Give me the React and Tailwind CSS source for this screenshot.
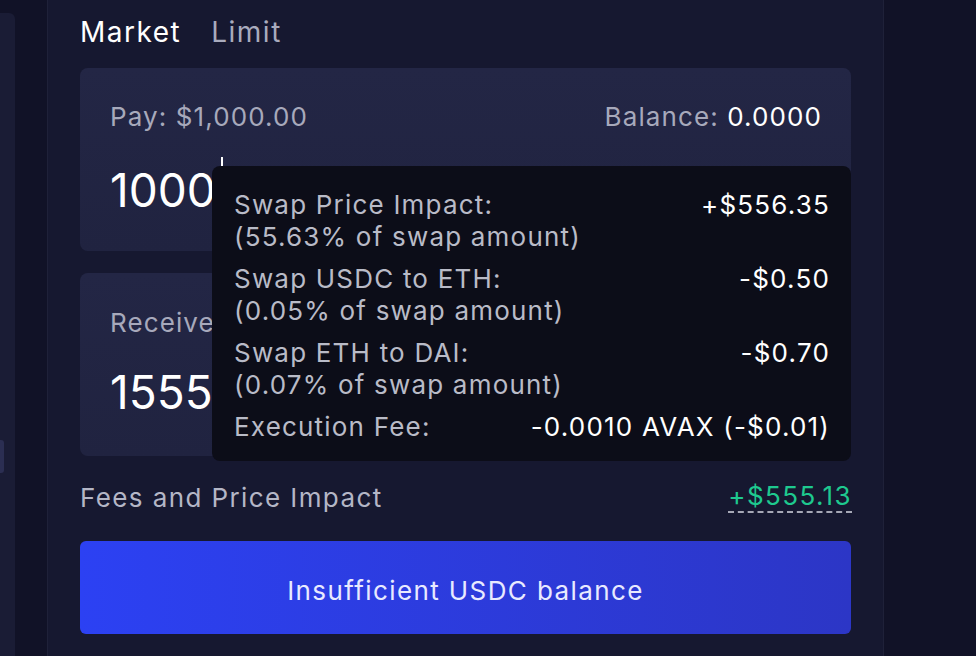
export default function App() {
  const rows = [
    { l1: "Swap Price Impact:", l2: "(55.63% of swap amount)", v: "+$556.35" },
    { l1: "Swap USDC to ETH:", l2: "(0.05% of swap amount)", v: "-$0.50" },
    { l1: "Swap ETH to DAI:", l2: "(0.07% of swap amount)", v: "-$0.70" },
  ];
  return (
    <div
      className="w-[976px] h-[656px] bg-[#111227] flex overflow-hidden"
      style={{ fontFamily: "Inter, 'Noto Sans', sans-serif" }}
    >
      <div className="w-[15px] pt-[13px] shrink-0">
        <div className="h-full bg-[#1a1c35] rounded-tr-[6px] relative">
          <div className="absolute left-0 top-[427px] w-[4px] h-[33px] bg-[#2b2e52] rounded-r-[3px]" />
        </div>
      </div>
      <div className="w-[32px] shrink-0" />
      <div className="w-[837px] shrink-0 border-x border-[#1f2139] bg-[#161830] px-[32px]">
        <div className="relative">
          <div className="h-[62px] flex items-center gap-[30px] text-[28px] tracking-[1.5px] pt-[2px]">
            <span className="text-white">Market</span>
            <span className="text-[#a9abbd]">Limit</span>
          </div>
          <div className="mt-[6px] h-[183px] rounded-[8px] bg-gradient-to-b from-[#232645] to-[#202340] px-[30px] relative">
            <div className="h-[96px] flex items-center justify-between text-[26px] tracking-[1.1px] pt-[1px]">
              <span className="text-[#a7a9bb]">Pay: $1,000.00</span>
              <span className="text-[#a7a9bb] -mr-[1px]">
                Balance: <span className="text-white">0.0000</span>
              </span>
            </div>
            <div className="h-[52px] flex items-center text-[46px] text-white leading-none">1000</div>
            <span className="absolute left-[141px] top-[89px] w-[2px] h-[14px] bg-white" />
          </div>
          <div className="mt-[22px] h-[183px] rounded-[8px] bg-gradient-to-b from-[#232645] to-[#202340] px-[30px]">
            <div className="h-[98px] flex items-center text-[26px] tracking-[1.1px] text-[#a7a9bb]">Receive</div>
            <div className="h-[42px] flex items-center text-[46px] text-white leading-none">1555</div>
          </div>
          <div className="mt-[24px] h-[34px] flex items-center justify-between text-[26px] tracking-[1.4px]">
            <span className="text-[#b4b6c6]">Fees and Price Impact</span>
            <span className="text-[#1ec98f] border-b-2 border-dashed border-[#a6a8b6] leading-[30px] -mr-[1px]">+$555.13</span>
          </div>
          <div className="mt-[27px] h-[93px] rounded-[6px] bg-gradient-to-r from-[#2c41f3] to-[#2c36c6] flex items-center justify-center text-[26px] tracking-[1.4px] text-[#e8eaff] pt-[5px]">
            Insufficient USDC balance
          </div>

          <div className="absolute left-[132px] top-[166px] w-[639px] h-[295px] rounded-[8px] bg-[#0c0d18] px-[22px] pt-[23px] text-[26px] tracking-[1.2px] leading-[32px] flex flex-col gap-[10px]">
            {rows.map((r) => (
              <div key={r.l1} className="flex justify-between">
                <div className="text-[#b9bbc7]">
                  <div>{r.l1}</div>
                  <div>{r.l2}</div>
                </div>
                <div className="text-white -mr-[1px]">{r.v}</div>
              </div>
            ))}
            <div className="flex justify-between">
              <span className="text-[#b9bbc7]">Execution Fee:</span>
              <span className="text-white -mr-[1px]">-0.0010 AVAX (-$0.01)</span>
            </div>
          </div>
        </div>
      </div>
      <div className="flex-1" />
    </div>
  );
}
